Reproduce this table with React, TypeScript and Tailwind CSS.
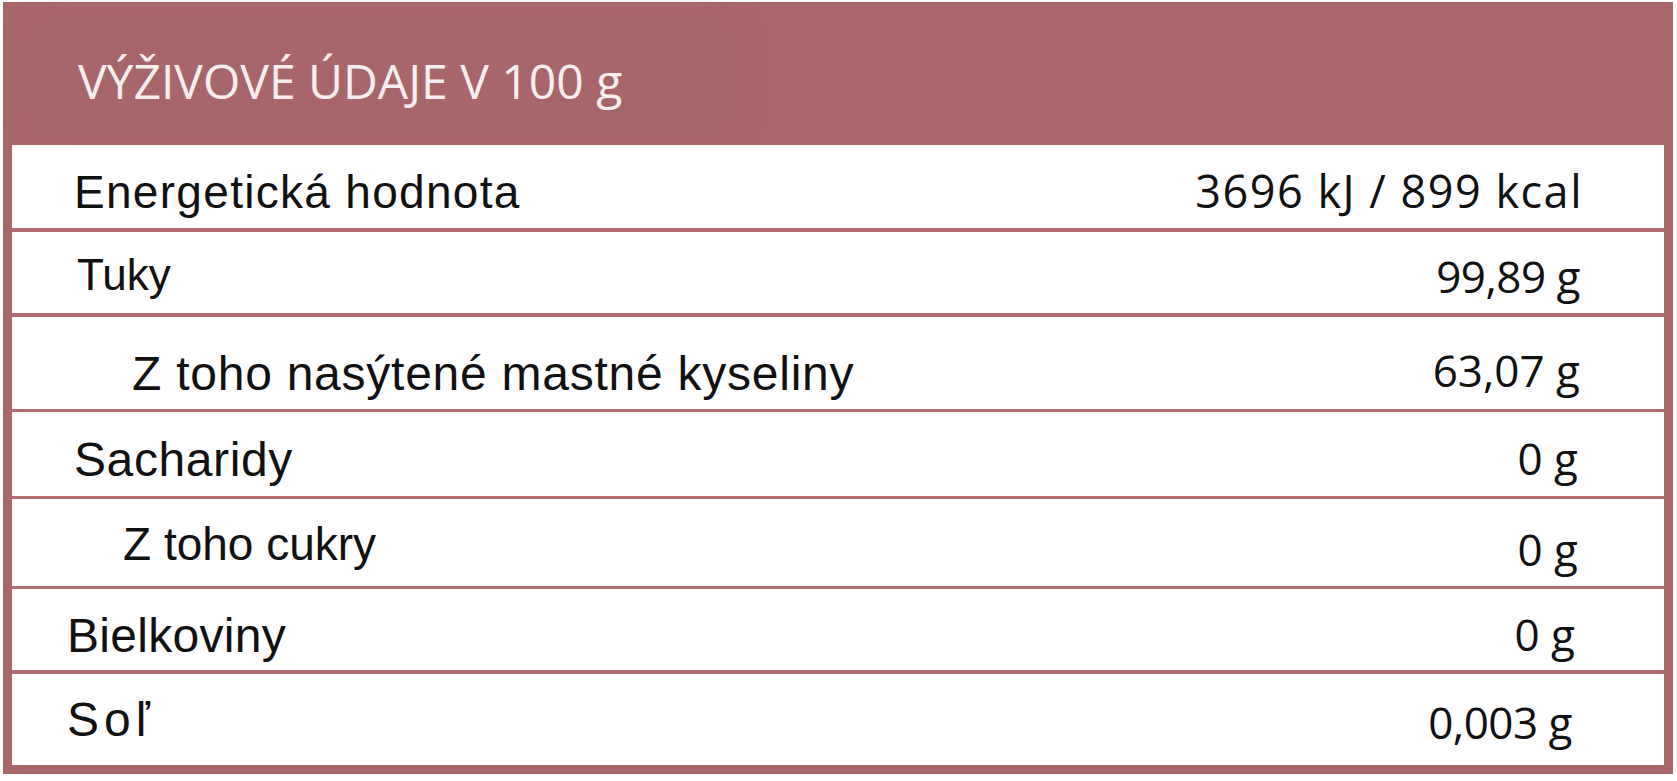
const rows = [
  {
    label: "Energetická hodnota",
    value: "3696 kJ / 899 kcal",
    row: "h-[87px] border-b-4",
    labelCls: "pl-[62px] pt-[24px] text-[46px] tracking-[1.3px]",
    valueCls: "pr-[81px] pt-[23px] text-[45px] tracking-[1.5px]",
  },
  {
    label: "Tuky",
    value: "99,89 g",
    row: "h-[85px] border-b-4",
    labelCls: "pl-[65px] pt-[21px] text-[44px]",
    valueCls: "pr-[84px] pt-[22px] text-[44px] tracking-[-0.5px]",
  },
  {
    label: "Z toho nasýtené mastné kyseliny",
    value: "63,07 g",
    row: "h-[95px] border-b-[3px]",
    labelCls: "pl-[120px] pt-[33px] text-[48px] tracking-[0.75px]",
    valueCls: "pr-[84px] pt-[31px] text-[44px]",
  },
  {
    label: "Sacharidy",
    value: "0 g",
    row: "h-[87px] border-b-[3px]",
    labelCls: "pl-[62px] pt-[24px] text-[48px] tracking-[0.6px]",
    valueCls: "pr-[86px] pt-[24px] text-[44px]",
  },
  {
    label: "Z toho cukry",
    value: "0 g",
    row: "h-[90px] border-b-[3px]",
    labelCls: "pl-[111px] pt-[22px] text-[46px]",
    valueCls: "pr-[86px] pt-[28px] text-[44px]",
  },
  {
    label: "Bielkoviny",
    value: "0 g",
    row: "h-[85px] border-b-4",
    labelCls: "pl-[55px] pt-[23px] text-[48px] tracking-[0.3px]",
    valueCls: "pr-[89px] pt-[23px] text-[44px]",
  },
  {
    label: "Soľ",
    value: "0,003 g",
    row: "h-[91px]",
    labelCls: "pl-[55px] pt-[22px] text-[48px] tracking-[5px]",
    valueCls: "pr-[92px] pt-[26px] text-[44px] tracking-[-0.5px]",
  },
];

export default function App() {
  return (
    <div className="h-[781px] w-[1677px] bg-white pl-[3px] pt-[2px]">
      <div className="flex w-[1670px] flex-col bg-[#aa6769] px-[9px] pb-[9px]">
        <div className="flex h-[143px] items-start">
          <div className="ml-[14px] mt-[16px] rounded-[30px] bg-[#a7676a] pl-[52px] pr-[110px] pt-[39px] pb-[30px] shadow-[0_0_30px_rgba(160,100,104,0.6)]">
            <h1 className="font-['Open_Sans',sans-serif] text-[48px] font-normal leading-none text-[#f7efef]">
              VÝŽIVOVÉ ÚDAJE V 100 g
            </h1>
          </div>
        </div>
        <div className="flex flex-col bg-white">
          {rows.map((r) => (
            <div
              key={r.label}
              className={`flex items-start justify-between border-[#b06c6e] ${r.row}`}
            >
              <span
                className={`font-['Liberation_Sans',Arial,sans-serif] leading-none text-[#111] ${r.labelCls}`}
              >
                {r.label}
              </span>
              <span
                className={`font-['Open_Sans',sans-serif] leading-none text-[#111] ${r.valueCls}`}
              >
                {r.value}
              </span>
            </div>
          ))}
        </div>
      </div>
    </div>
  );
}
